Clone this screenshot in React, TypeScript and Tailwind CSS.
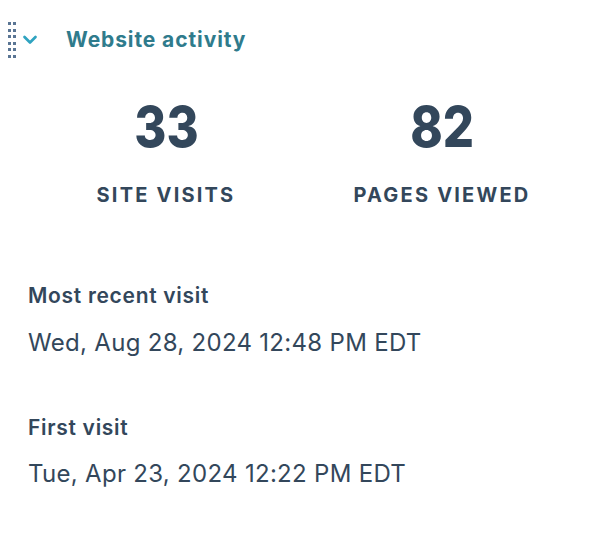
import React from "react";

const font = { fontFamily: "Inter, 'Noto Sans', sans-serif" };

function Handle() {
  const rows = [0, 1, 2, 3, 4, 5];
  return (
    <div className="flex flex-col gap-[3.5px]">
      {rows.map((r) => (
        <div key={r} className="flex gap-[2px]">
          <div className="w-[3px] h-[3px] bg-[#5a7594]" />
          <div className="w-[3px] h-[3px] bg-[#5a7594]" />
        </div>
      ))}
    </div>
  );
}

export default function App() {
  return (
    <div className="w-[606px] h-[546px] bg-white text-[#33475b]" style={font}>
      <div className="flex items-center h-[38px] mt-[21px] pl-[8px]">
        <Handle />
        <svg width="16" height="10" viewBox="0 0 16 10" className="ml-[6px]">
          <path d="M2.5 2 L8 7.5 L13.5 2" fill="none" stroke="#2fa3c0" strokeWidth="2.7" strokeLinecap="round" strokeLinejoin="round" />
        </svg>
        <div className="ml-[28px] text-[21px] font-bold text-[#2f7b8c] tracking-[0.9px]">Website activity</div>
      </div>
      <div className="grid grid-cols-2 w-[552px] ml-[28px] mt-[36px]">
        <div className="flex flex-col items-center">
          <div className="text-[57px] font-extrabold leading-[64px] scale-x-[0.86]">33</div>
          <div className="mt-[24px] text-[20px] font-bold tracking-[2.2px] leading-[24px]">SITE VISITS</div>
        </div>
        <div className="flex flex-col items-center">
          <div className="text-[57px] font-extrabold leading-[64px] scale-x-[0.86]">82</div>
          <div className="mt-[24px] text-[20px] font-bold tracking-[2.2px] leading-[24px]">PAGES VIEWED</div>
        </div>
      </div>
      <div className="ml-[28px] mt-[75px]">
        <div className="text-[21px] font-semibold leading-[28px] tracking-[0.7px]">Most recent visit</div>
        <div className="text-[24px] leading-[30px] mt-[18px] tracking-[0.3px]">Wed, Aug 28, 2024 12:48 PM EDT</div>
        <div className="text-[21px] font-semibold leading-[28px] mt-[56px] tracking-[0.7px]">First visit</div>
        <div className="text-[24px] leading-[30px] mt-[17px] tracking-[0.3px]">Tue, Apr 23, 2024 12:22 PM EDT</div>
      </div>
    </div>
  );
}
